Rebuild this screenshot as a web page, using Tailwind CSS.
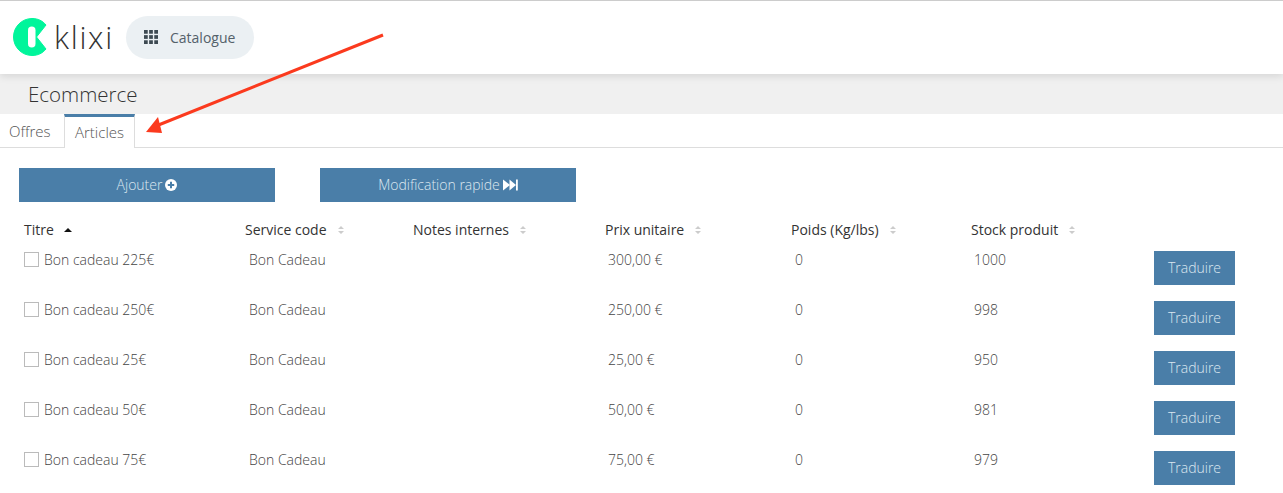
<!DOCTYPE html>
<html lang="en">
<head>
  <meta charset="UTF-8">
  <title>Klixi Ecommerce</title>
  <script src="https://cdn.jsdelivr.net/npm/@tailwindcss/browser@4"></script>
</head>
<body class="relative h-[493px] overflow-hidden bg-white font-['Open_Sans',sans-serif] font-light text-[#444] antialiased">
  <!-- Header -->
  <header class="relative z-10 flex h-[74px] items-center border-t border-[#ccc] bg-white pb-[1px] pl-[13px] shadow-[0_2px_8px_rgba(0,0,0,0.12)]">
    <svg class="h-[38px] w-[35px]" viewBox="0 0 35 38">
      <path d="M19 0.500C25 0.500 29.500 2.800 33 7L23.500 19L33 31C29.500 35.200 25 37.500 19 37.500C8.800 37.500 0.500 29.200 0.500 19C0.500 8.800 8.800 0.500 19 0.500Z" fill="#00f59b" stroke="#00f59b" stroke-width="1" stroke-linejoin="round"/>
      <rect x="15" y="8.500" width="7.500" height="21" rx="3.750" fill="#fff"/>
    </svg>
    <span class="ml-[6px] w-[58px] text-[31px] leading-none tracking-[1.7px] text-[#333]">klixi</span>
    <div class="ml-[14px] flex h-[43px] w-[128px] items-center rounded-full bg-[#ebf0f3] pl-[18px]">
      <svg class="h-[14px] w-[14px]" viewBox="0 0 15 15" fill="#3d4a52">
        <rect x="0" y="0" width="4" height="4"/><rect x="5.500" y="0" width="4" height="4"/><rect x="11" y="0" width="4" height="4"/>
        <rect x="0" y="5.500" width="4" height="4"/><rect x="5.500" y="5.500" width="4" height="4"/><rect x="11" y="5.500" width="4" height="4"/>
        <rect x="0" y="11" width="4" height="4"/><rect x="5.500" y="11" width="4" height="4"/><rect x="11" y="11" width="4" height="4"/>
      </svg>
      <span class="ml-[12px] text-[14px] font-normal text-[#54616a]">Catalogue</span>
    </div>
  </header>

  <!-- Title band -->
  <div class="flex h-[40px] items-center bg-[#f0f0f0] pl-[28px] text-[20.5px] text-[#333]">Ecommerce</div>

  <!-- Tabs -->
  <nav class="flex h-[34px] border-b border-[#ddd] text-[15px]">
    <a class="flex w-[64px] items-center pl-[9px] pt-[2px] text-[#555]">Offres</a>
    <a class="mb-[-1px] flex w-[71px] items-center justify-center border-x border-t-[3px] border-x-[#ddd] border-t-[#4a7ea8] bg-white text-[#555]">Articles</a>
  </nav>

  <!-- Actions -->
  <div class="mt-[20px] flex gap-[45px] pl-[19px]">
    <button class="flex h-[34px] w-[256px] items-center justify-center gap-[3px] bg-[#4a7ea8] pb-[1px] text-[14px] text-[#dde8f0]">
      Ajouter
      <svg class="h-[12px] w-[12px]" viewBox="0 0 12 12"><circle cx="6" cy="6" r="6" fill="#fff"/><path d="M6 2.800V9.200M2.800 6H9.200" stroke="#4a7ea8" stroke-width="2"/></svg>
    </button>
    <button class="flex h-[34px] w-[256px] items-center justify-center gap-[3px] bg-[#4a7ea8] pb-[1px] text-[14px] text-[#dde8f0]">
      Modification rapide
      <svg class="h-[12px] w-[15px]" viewBox="0 0 15 12" fill="#fff"><path d="M0 0.500L7 6L0 11.500Z"/><path d="M6.500 0.500L13 6L6.500 11.500Z"/><rect x="13" y="0.500" width="1.800" height="11"/></svg>
    </button>
  </div>

  <!-- Table -->
  <div class="ml-[24px] mt-[18px] grid grid-cols-[221px_168px_192px_186px_180px_183px_81px] text-[14px] leading-[18px]">
    <div class="flex h-[19px] items-center font-normal text-[#333]">Titre
      <svg class="ml-[10px] h-[4px] w-[8px]" viewBox="0 0 8 4"><path d="M0 4L4 0L8 4Z" fill="#111"/></svg>
    </div>
    <div class="flex h-[19px] items-center font-normal text-[#333]">Service code
      <svg class="ml-[11px] h-[8px] w-[6px]" viewBox="0 0 6 8" fill="#ccc"><path d="M0 3L3 0L6 3ZM0 5L3 8L6 5Z"/></svg>
    </div>
    <div class="flex h-[19px] items-center font-normal text-[#333]">Notes internes
      <svg class="ml-[11px] h-[8px] w-[6px]" viewBox="0 0 6 8" fill="#ccc"><path d="M0 3L3 0L6 3ZM0 5L3 8L6 5Z"/></svg>
    </div>
    <div class="flex h-[19px] items-center font-normal text-[#333]">Prix unitaire
      <svg class="ml-[11px] h-[8px] w-[6px]" viewBox="0 0 6 8" fill="#ccc"><path d="M0 3L3 0L6 3ZM0 5L3 8L6 5Z"/></svg>
    </div>
    <div class="flex h-[19px] items-center font-normal text-[#333]">Poids (Kg/lbs)
      <svg class="ml-[11px] h-[8px] w-[6px]" viewBox="0 0 6 8" fill="#ccc"><path d="M0 3L3 0L6 3ZM0 5L3 8L6 5Z"/></svg>
    </div>
    <div class="flex h-[19px] items-center font-normal text-[#333]">Stock produit
      <svg class="ml-[11px] h-[8px] w-[6px]" viewBox="0 0 6 8" fill="#ccc"><path d="M0 3L3 0L6 3ZM0 5L3 8L6 5Z"/></svg>
    </div>
    <div></div>

    <!-- Row 1 -->
    <div class="mt-[12px] flex h-[50px] items-start"><span class="mt-[1px] h-[15px] w-[15px] border border-[#bbb]"></span><span class="ml-[5px]">Bon cadeau 225€</span></div>
    <div class="mt-[12px] h-[50px] pl-[4px]">Bon Cadeau</div>
    <div class="mt-[12px] h-[50px]"></div>
    <div class="mt-[12px] h-[50px] pl-[3px]">300,00 €</div>
    <div class="mt-[12px] h-[50px] pl-[4px]">0</div>
    <div class="mt-[12px] h-[50px] pl-[3px]">1000</div>
    <div class="mt-[12px] h-[50px]"><button class="h-[34px] w-[81px] bg-[#4a7ea8] pb-[1px] text-[14px] text-[#dde8f0]">Traduire</button></div>

    <!-- Row 2 -->
    <div class="flex h-[50px] items-start"><span class="mt-[1px] h-[15px] w-[15px] border border-[#bbb]"></span><span class="ml-[5px]">Bon cadeau 250€</span></div>
    <div class="h-[50px] pl-[4px]">Bon Cadeau</div>
    <div class="h-[50px]"></div>
    <div class="h-[50px] pl-[3px]">250,00 €</div>
    <div class="h-[50px] pl-[4px]">0</div>
    <div class="h-[50px] pl-[3px]">998</div>
    <div class="h-[50px]"><button class="h-[34px] w-[81px] bg-[#4a7ea8] pb-[1px] text-[14px] text-[#dde8f0]">Traduire</button></div>

    <!-- Row 3 -->
    <div class="flex h-[50px] items-start"><span class="mt-[1px] h-[15px] w-[15px] border border-[#bbb]"></span><span class="ml-[5px]">Bon cadeau 25€</span></div>
    <div class="h-[50px] pl-[4px]">Bon Cadeau</div>
    <div class="h-[50px]"></div>
    <div class="h-[50px] pl-[3px]">25,00 €</div>
    <div class="h-[50px] pl-[4px]">0</div>
    <div class="h-[50px] pl-[3px]">950</div>
    <div class="h-[50px]"><button class="h-[34px] w-[81px] bg-[#4a7ea8] pb-[1px] text-[14px] text-[#dde8f0]">Traduire</button></div>

    <!-- Row 4 -->
    <div class="flex h-[50px] items-start"><span class="mt-[1px] h-[15px] w-[15px] border border-[#bbb]"></span><span class="ml-[5px]">Bon cadeau 50€</span></div>
    <div class="h-[50px] pl-[4px]">Bon Cadeau</div>
    <div class="h-[50px]"></div>
    <div class="h-[50px] pl-[3px]">50,00 €</div>
    <div class="h-[50px] pl-[4px]">0</div>
    <div class="h-[50px] pl-[3px]">981</div>
    <div class="h-[50px]"><button class="h-[34px] w-[81px] bg-[#4a7ea8] pb-[1px] text-[14px] text-[#dde8f0]">Traduire</button></div>

    <!-- Row 5 -->
    <div class="flex h-[50px] items-start"><span class="mt-[1px] h-[15px] w-[15px] border border-[#bbb]"></span><span class="ml-[5px]">Bon cadeau 75€</span></div>
    <div class="h-[50px] pl-[4px]">Bon Cadeau</div>
    <div class="h-[50px]"></div>
    <div class="h-[50px] pl-[3px]">75,00 €</div>
    <div class="h-[50px] pl-[4px]">0</div>
    <div class="h-[50px] pl-[3px]">979</div>
    <div class="h-[50px]"><button class="h-[34px] w-[81px] bg-[#4a7ea8] pb-[1px] text-[14px] text-[#dde8f0]">Traduire</button></div>
  </div>

  <!-- Annotation arrow drawn over the page -->
  <svg class="absolute left-0 top-0 z-20 h-[493px] w-[1283px]" viewBox="0 0 1283 493">
    <path d="M383 35L156 126" stroke="#fb3a1e" stroke-width="3" fill="none"/>
    <path d="M146 132L158 117L162 133Z" fill="#fb3a1e"/>
  </svg>
</body>
</html>
